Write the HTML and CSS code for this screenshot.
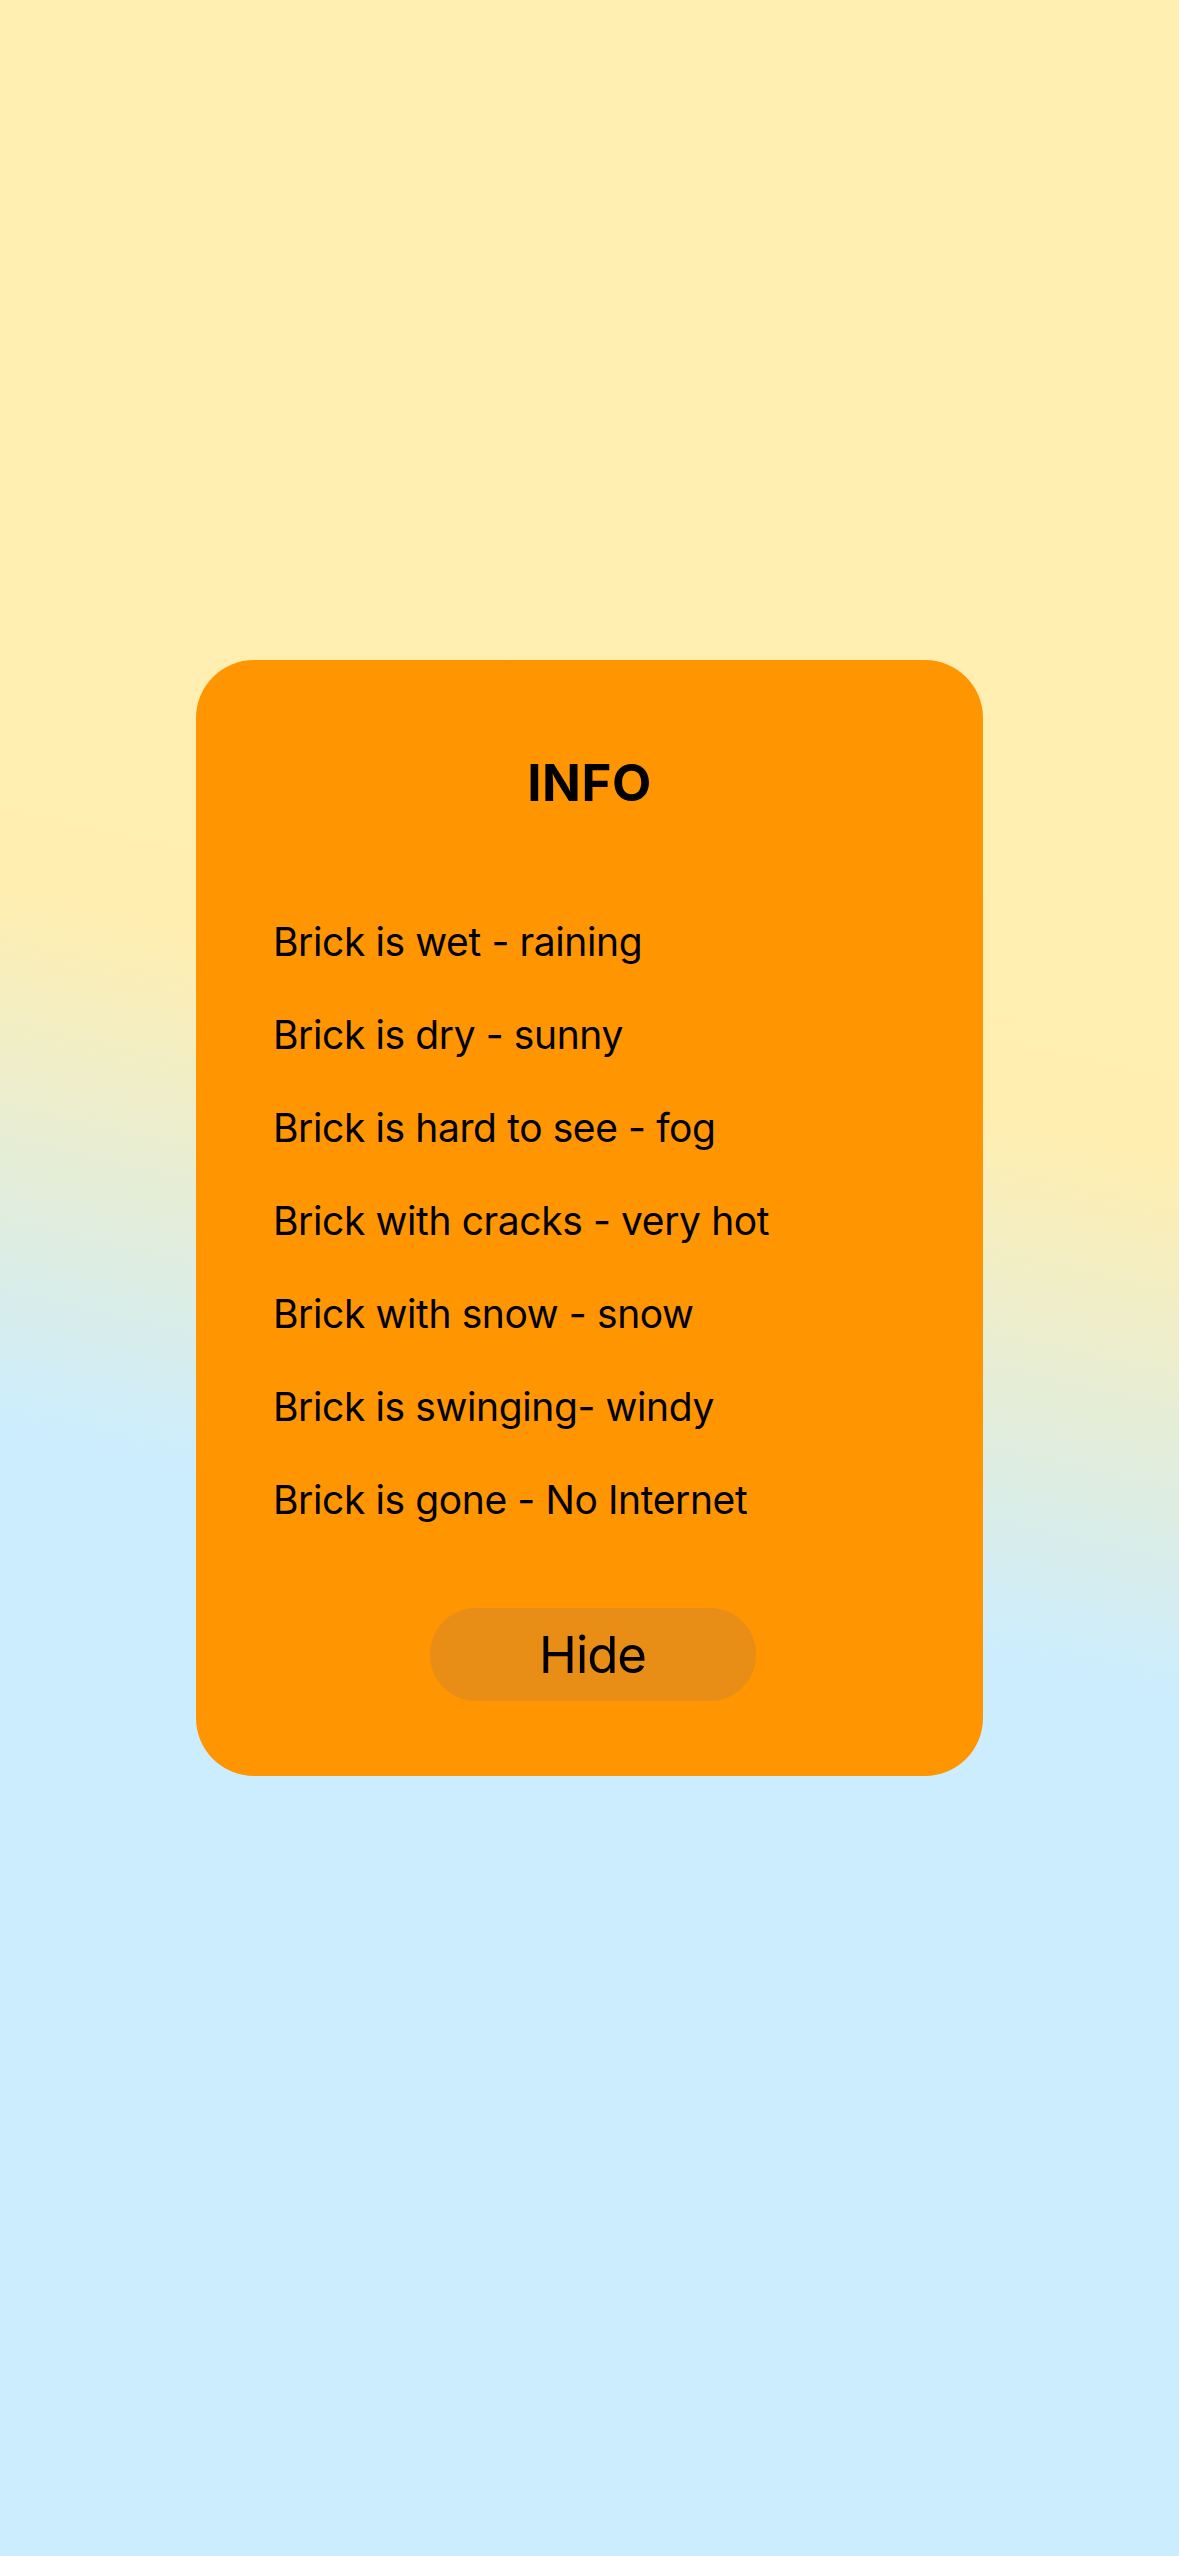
FILE: index.html
```html
<!DOCTYPE html>
<html lang="en">
<head>
<meta charset="utf-8">
<title>Info</title>
<link rel="stylesheet" href="styles.css">
</head>
<body>
<main class="screen">
  <section class="card">
    <h1 class="title">INFO</h1>
    <ul class="legend">
      <li>Brick is wet - raining</li>
      <li>Brick is dry - sunny</li>
      <li>Brick is hard to see - fog</li>
      <li>Brick with cracks - very hot</li>
      <li>Brick with snow - snow</li>
      <li>Brick is swinging- windy</li>
      <li>Brick is gone - No Internet</li>
    </ul>
    <div class="actions">
      <button class="hide-btn" type="button">Hide</button>
    </div>
  </section>
</main>
</body>
</html>
```

FILE: styles.css
```css
html, body {
  margin: 0;
  padding: 0;
}

body {
  font-family: Inter, "Noto Sans", "Liberation Sans", sans-serif;
  color: #000;
}

.screen {
  box-sizing: border-box;
  width: 1179px;
  height: 2556px;
  padding-top: 660px;
  display: flex;
  flex-direction: column;
  align-items: center;
  background: linear-gradient(193deg, #FFEFB1 0%, #FFEEB0 41%, #CCEDFE 60%, #CCEDFE 100%);
}

.card {
  box-sizing: border-box;
  width: 787px;
  height: 1116px;
  background: #FF9500;
  border-radius: 58px;
  padding: 92px 0 0 77px;
  display: flex;
  flex-direction: column;
}

.title {
  margin: 0 0 81px -77px;
  font-size: 51px;
  line-height: 62px;
  font-weight: 700;
  letter-spacing: 0.5px;
  text-align: center;
}

.legend {
  list-style: none;
  margin: 0;
  padding: 0;
}

.legend li {
  font-size: 39px;
  line-height: 93px;
  height: 93px;
  letter-spacing: -0.4px;
}

.actions {
  margin: 62px 0 0 -71px;
  display: flex;
  justify-content: center;
}

.hide-btn {
  width: 326px;
  height: 93px;
  border: none;
  border-radius: 46px;
  background: #E88D16;
  color: #000;
  font-family: Inter, "Noto Sans", "Liberation Sans", sans-serif;
  font-size: 51px;
  line-height: 93px;
  letter-spacing: -1.1px;
  padding: 0;
}
```
